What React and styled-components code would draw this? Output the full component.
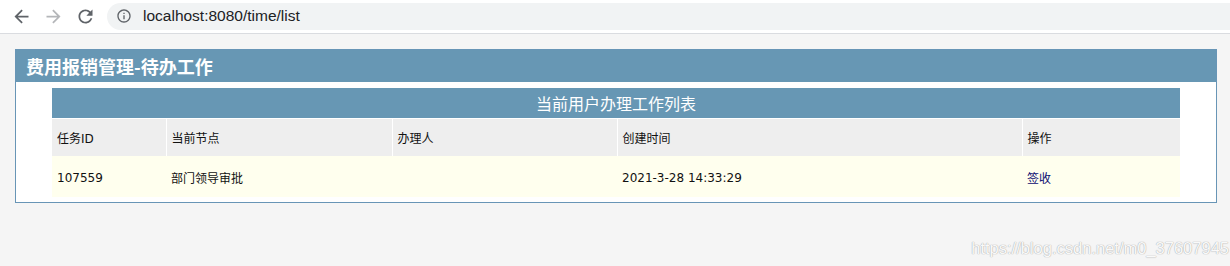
import React from "react";
import styled, { createGlobalStyle } from "styled-components";

const Global = createGlobalStyle`
  html, body { margin: 0; padding: 0; background: #f5f5f5; }
  #root { min-height: 266px; position: relative; }
  * { box-sizing: border-box; }
`;

const Page = styled.div`
  position: relative;
  min-height: 266px;
  background: #f5f5f5;
  font-family: "DejaVu Sans", "Noto Sans CJK SC", sans-serif;
  overflow: hidden;
`;

const Chrome = styled.div`
  height: 34px;
  background: #ffffff;
  border-bottom: 1px solid #dadce0;
  display: flex;
  align-items: center;
  padding: 0 0 1px 11px;
  gap: 11px;
`;

const NavIcon = styled.svg`
  width: 21px;
  height: 21px;
  flex: none;
  fill: ${(p) => (p.$dim ? "#b4b6b9" : "#5f6368")};
`;

const Omnibox = styled.div`
  flex: 1;
  height: 27px;
  border-radius: 14px 0 0 14px;
  background: #f1f3f4;
  display: flex;
  align-items: center;
  padding-left: 9px;
  gap: 11px;
`;

const InfoIcon = styled.svg`
  width: 16px;
  height: 16px;
  fill: #5f6368;
  flex: none;
`;

const Url = styled.span`
  font-family: "Liberation Sans", Arial, sans-serif;
  font-size: 15.5px;
  color: #202124;
`;

const Content = styled.div`
  padding: 15px 13px 0 15px;
`;

const Panel = styled.div`
  border: 1px solid #6895b6;
  background: #ffffff;
  padding-bottom: 5px;
`;

const PanelHeader = styled.div`
  height: 32px;
  line-height: 32px;
  background: #6797b4;
  color: #ffffff;
  font-family: "Noto Sans CJK SC", sans-serif;
  font-weight: 700;
  font-size: 18px;
  padding-left: 10px;
`;

const TableWrap = styled.div`
  padding: 6px 36px 0 36px;
`;

const Table = styled.table`
  width: 1128px;
  table-layout: fixed;
  border-collapse: collapse;
  border-spacing: 0;
  font-size: 12px;
  color: #111;
`;

const Caption = styled.th`
  height: 30px;
  background: #6797b4;
  color: #ffffff;
  font-family: "Noto Sans CJK SC", sans-serif;
  font-weight: 400;
  font-size: 16px;
  text-align: center;
  padding: 0;
  border-bottom: 1px solid #ffffff;
`;

const HeadCell = styled.th`
  height: 38px;
  background: #eeeeee;
  font-weight: 400;
  text-align: left;
  padding: 1px 0 0 5px;
  border-left: 1px solid #ffffff;
  &:first-child { border-left: none; }
`;

const Cell = styled.td`
  height: 41px;
  background: #ffffee;
  padding: 2px 0 0 5px;
  color: ${(p) => (p.$link ? "#0b0b70" : "#111")};
`;

const Watermark = styled.div`
  position: absolute;
  right: 1px;
  bottom: 8px;
  font-family: "Liberation Sans", Arial, sans-serif;
  font-size: 16.5px;
  color: rgba(255, 255, 255, 0.95);
  text-shadow: 0 0 1px #a8a8a8, 0 0 1px #b8b8b8;
`;

const cols = [114, 226, 225, 405, 158];
const heads = ["任务ID", "当前节点", "办理人", "创建时间", "操作"];

export default function App() {
  return (
    <Page>
      <Global />
      <Chrome>
        <NavIcon viewBox="0 0 24 24">
          <path d="M20 11H7.83l5.59-5.59L12 4l-8 8 8 8 1.41-1.41L7.83 13H20v-2z" />
        </NavIcon>
        <NavIcon viewBox="0 0 24 24" $dim>
          <path d="M4 11h12.17l-5.59-5.59L12 4l8 8-8 8-1.41-1.41L16.17 13H4v-2z" />
        </NavIcon>
        <NavIcon viewBox="0 0 24 24">
          <path d="M17.65 6.35C16.2 4.9 14.21 4 12 4c-4.42 0-7.990 3.58-7.99 8s3.57 8 7.99 8c3.73 0 6.84-2.550 7.73-6h-2.08c-.82 2.33-3.04 4-5.65 4-3.31 0-6-2.69-6-6s2.69-6 6-6c1.66 0 3.14.69 4.22 1.78L13 11h7V4l-2.35 2.35z" />
        </NavIcon>
        <Omnibox>
          <InfoIcon viewBox="0 0 24 24">
            <path d="M11 7h2v2h-2zm0 4h2v6h-2zm1-9C6.48 2 2 6.48 2 12s4.48 10 10 10 10-4.48 10-10S17.52 2 12 2zm0 18c-4.41 0-8-3.590-8-8s3.59-8 8-8 8 3.59 8 8-3.59 8-8 8z" />
          </InfoIcon>
          <Url>localhost:8080/time/list</Url>
        </Omnibox>
      </Chrome>
      <Content>
        <Panel>
          <PanelHeader>费用报销管理-待办工作</PanelHeader>
          <TableWrap>
            <Table>
              <colgroup>
                {cols.map((w, i) => (
                  <col key={i} style={{ width: w }} />
                ))}
              </colgroup>
              <thead>
                <tr>
                  <Caption colSpan={5}>当前用户办理工作列表</Caption>
                </tr>
                <tr>
                  {heads.map((h) => (
                    <HeadCell key={h}>{h}</HeadCell>
                  ))}
                </tr>
              </thead>
              <tbody>
                <tr>
                  <Cell>107559</Cell>
                  <Cell>部门领导审批</Cell>
                  <Cell></Cell>
                  <Cell>2021-3-28 14:33:29</Cell>
                  <Cell $link>签收</Cell>
                </tr>
              </tbody>
            </Table>
          </TableWrap>
        </Panel>
      </Content>
      <Watermark>https://blog.csdn.net/m0_37607945</Watermark>
    </Page>
  );
}
